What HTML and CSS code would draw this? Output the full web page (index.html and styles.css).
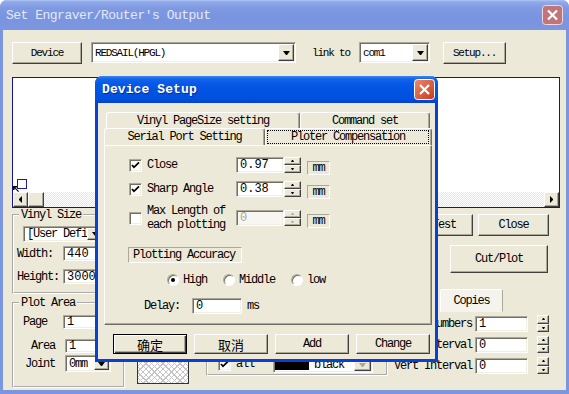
FILE: index.html
```html
<!DOCTYPE html>
<html lang="en">
<head>
    <meta charset="UTF-8">
    <title>Set Engraver/Router's Output</title>
    <link rel="stylesheet" href="styles.css">
</head>
<body>
<div class="win">
    <div class="caption">
        <span class="cap-title">Set Engraver/Router's Output</span>
        <svg class="cap-close" width="21" height="20" viewBox="0 0 21 20">
            <rect x="0.5" y="0.5" width="20" height="19" rx="3" fill="#c2747b" stroke="#eadbe3"/>
            <path d="M6 5.5l9 9M15 5.5l-9 9" stroke="#fff" stroke-width="2.2"/>
        </svg>
    </div>
    <div class="client">
        <!--设备选择行-->
        <div class="toprow">
            <div class="btn btn-device">Device</div>
            <div class="combo field combo-dev"><span class="combo-val">REDSAIL(HPGL)</span><span class="btn dd"><i class="tri-d"></i></span></div>
            <span class="lbl-link">link to</span>
            <div class="combo field combo-port"><span class="combo-val">com1</span><span class="btn dd"><i class="tri-d"></i></span></div>
            <div class="btn btn-setup">Setup...</div>
        </div>
        <!--预览区-->
        <div class="preview">
            <div class="canvas">
                <span class="page-mark"></span>
                <svg class="origin" width="6" height="6" viewBox="0 0 6 6"><path d="M0 0h4v1.5H2.2L6 5.2 5.2 6 1.5 2.2V4H0z" fill="#000"/></svg>
            </div>
            <div class="hscroll">
                <span class="btn sbtn"><i class="tri-l"></i></span>
                <span class="btn thumb"></span>
                <span class="track"></span>
                <span class="btn sbtn"><i class="tri-r"></i></span>
            </div>
        </div>
        <div class="lower">
            <div class="col-left">
                <fieldset class="grp grp-vinyl">
                    <legend>Vinyl Size</legend>
                    <div class="combo field combo-size"><span class="combo-val">[User Defi</span><span class="btn dd"><i class="tri-d"></i></span></div>
                    <div class="frow"><span class="flbl">Width:</span><span class="field inp inp-size">440</span></div>
                    <div class="frow frow-h"><span class="flbl">Height:</span><span class="field inp inp-size">3000</span></div>
                </fieldset>
                <fieldset class="grp grp-plot">
                    <legend>Plot Area</legend>
                    <div class="frow frow-page"><span class="flbl lbl-page">Page</span><span class="field inp inp-plot">1</span></div>
                    <div class="frow frow-area"><span class="flbl lbl-r">Area</span><span class="field inp inp-plot">1</span></div>
                    <div class="frow frow-joint"><span class="flbl lbl-r">Joint</span><div class="combo field combo-joint"><span class="combo-val">0mm</span><span class="btn dd"><i class="tri-d"></i></span></div></div>
                </fieldset>
            </div>
            <div class="col-mid">
                <div class="hatch"></div>
                <div class="grp-color">
                    <span class="chk"><svg width="11" height="11" viewBox="0 0 11 11"><path d="M2 5l2 2.3L9 2.3" stroke="#000" stroke-width="1.8" fill="none"/></svg></span>
                    <span class="lbl-all">all</span>
                    <div class="combo field combo-color"><span class="swatch"></span><span class="combo-val">black</span><span class="btn dd"><i class="tri-d tri-gray"></i></span></div>
                </div>
            </div>
            <div class="col-right">
                <div class="rbtns">
                    <div class="btn btn-test">Test</div>
                    <div class="btn btn-close">Close</div>
                </div>
                <div class="btn btn-cut">Cut/Plot</div>
                <div class="copies-tab">Copies</div>
                <div class="crow crow-first"><span class="clbl">Numbers</span><span class="field inp inp-c">1</span><span class="spin spin-c"><span class="btn sb"><i class="tri-u"></i></span><span class="btn sb"><i class="tri-dn"></i></span></span></div>
                <div class="crow"><span class="clbl">Interval</span><span class="field inp inp-c">0</span><span class="spin spin-c"><span class="btn sb"><i class="tri-u"></i></span><span class="btn sb"><i class="tri-dn"></i></span></span></div>
                <div class="crow"><span class="clbl">Vert Interval</span><span class="field inp inp-c">0</span><span class="spin spin-c"><span class="btn sb"><i class="tri-u"></i></span><span class="btn sb"><i class="tri-dn"></i></span></span></div>
            </div>
        </div>
    </div>

    <!--弹出的Device Setup对话框-->
    <div class="dlg">
        <div class="dlg-cap">
            <span class="dlg-title">Device Setup</span>
            <svg class="cap-close" width="21" height="21" viewBox="0 0 21 21">
                <defs><linearGradient id="xr" x1="0" y1="0" x2="1" y2="1"><stop offset="0" stop-color="#ef8a6c"/><stop offset="1" stop-color="#c7391a"/></linearGradient></defs>
                <rect x="0.5" y="0.5" width="20" height="20" rx="3" fill="url(#xr)" stroke="#fff"/>
                <path d="M6 6l9 9M15 6l-9 9" stroke="#fff" stroke-width="2.2"/>
            </svg>
        </div>
        <div class="dlg-body">
            <div class="tabs">
                <div class="tabrow tabrow-back">
                    <span class="tab tab-vinyl">Vinyl PageSize setting</span>
                    <span class="tab tab-cmd">Command set</span>
                </div>
                <div class="tabrow tabrow-front">
                    <span class="tab tab-serial">Serial Port Setting</span>
                    <span class="tab tab-comp"><span class="focus">Ploter Compensation</span></span>
                </div>
                <div class="panel">
                    <div class="opt">
                        <span class="chk"><svg width="11" height="11" viewBox="0 0 11 11"><path d="M2 5l2 2.3L9 2.3" stroke="#000" stroke-width="1.8" fill="none"/></svg></span>
                        <span class="olbl">Close</span>
                        <span class="field inp inp-val">0.97</span>
                        <span class="spin"><span class="btn sb"><i class="tri-u"></i></span><span class="btn sb"><i class="tri-dn"></i></span></span>
                        <span class="unit">mm</span>
                    </div>
                    <div class="opt">
                        <span class="chk"><svg width="11" height="11" viewBox="0 0 11 11"><path d="M2 5l2 2.3L9 2.3" stroke="#000" stroke-width="1.8" fill="none"/></svg></span>
                        <span class="olbl">Sharp Angle</span>
                        <span class="field inp inp-val">0.38</span>
                        <span class="spin"><span class="btn sb"><i class="tri-u"></i></span><span class="btn sb"><i class="tri-dn"></i></span></span>
                        <span class="unit">mm</span>
                    </div>
                    <div class="opt opt-tall">
                        <span class="chk"></span>
                        <span class="olbl olbl-2">Max Length of<br>each plotting</span>
                        <span class="field inp inp-val dis">0</span>
                        <span class="spin dis"><span class="btn sb"><i class="tri-u"></i></span><span class="btn sb"><i class="tri-dn"></i></span></span>
                        <span class="unit">mm</span>
                    </div>
                    <div class="acc">Plotting Accuracy</div>
                    <div class="radios">
                        <span class="radio on"></span><span class="rlbl">High</span>
                        <span class="radio"></span><span class="rlbl">Middle</span>
                        <span class="radio"></span><span class="rlbl">low</span>
                    </div>
                    <div class="delay">
                        <span class="dlbl">Delay:</span>
                        <span class="field inp inp-delay">0</span>
                        <span class="ms">ms</span>
                    </div>
                </div>
            </div>
            <div class="dlg-btns">
                <div class="btn dbtn default cjk">确定</div>
                <div class="btn dbtn cjk">取消</div>
                <div class="btn dbtn">Add</div>
                <div class="btn dbtn">Change</div>
            </div>
        </div>
    </div>
</div>
</body>
</html>
```
FILE: styles.css
```css
* {
    box-sizing: border-box;
}
body {
    margin: 0;
    background: #fff;
    color: #000;
    font-family: "Liberation Mono", "DejaVu Sans Mono", monospace;
    font-size: 12px;
    letter-spacing: -1.2px;
    white-space: nowrap;
}
i {
    display: block;
    box-sizing: content-box;
}

/*外层窗口(非活动状态)*/
.win {
    position: relative;
    width: 569px;
    height: 394px;
    background: #7b96df;
    border-radius: 7px 7px 0 0;
    overflow: hidden;
}
.caption {
    height: 30px;
    display: flex;
    align-items: center;
    justify-content: space-between;
    padding: 0 6px;
    background: linear-gradient(180deg, #aec4f3 0, #8fa9ea 2px, #7e9ae2 8px, #7a95df 60%, #7c97e0 100%);
}
.cap-title {
    font-size: 13px;
    letter-spacing: -0.5px;
    color: #e2e9f8;
}
.cap-close {
    display: block;
}
.client {
    margin: 0 3px;
    height: 360px;
    background: #ece9d8;
    padding: 11px 0 0 9px;
}

/*通用控件*/
.btn {
    display: flex;
    align-items: center;
    justify-content: center;
    background: #ece9d8;
    border: 1px solid;
    border-color: #fff #404040 #404040 #fff;
    box-shadow: inset -1px -1px #aca899;
}
.field {
    background: #fff;
    border: 1px solid;
    border-color: #aca899 #fff #fff #aca899;
    box-shadow: inset 1px 1px #716f64, inset -1px -1px #f1efe2;
}
.combo {
    display: flex;
    padding: 1px;
}
.combo-val {
    flex: 1;
    display: flex;
    align-items: center;
    padding-left: 2px;
}
.dd {
    flex: none;
    width: 16px;
}
.tri-d {
    width: 1px;
    height: 0;
    border-left: 3px solid transparent;
    border-right: 3px solid transparent;
    border-top: 4px solid #000;
}
.tri-gray {
    border-top-color: #aca899;
}
.tri-l {
    width: 0;
    height: 1px;
    border-top: 3px solid transparent;
    border-bottom: 3px solid transparent;
    border-right: 3px solid #000;
}
.tri-r {
    width: 0;
    height: 1px;
    border-top: 3px solid transparent;
    border-bottom: 3px solid transparent;
    border-left: 3px solid #000;
}
.tri-u {
    width: 1px;
    height: 0;
    border-left: 1px solid transparent;
    border-right: 1px solid transparent;
    border-bottom: 2px solid #000;
}
.tri-dn {
    width: 1px;
    height: 0;
    border-left: 1px solid transparent;
    border-right: 1px solid transparent;
    border-top: 2px solid #000;
}
.inp {
    display: flex;
    align-items: center;
    padding-left: 3px;
    letter-spacing: 0;
}
.spin {
    display: flex;
    flex-direction: column;
    width: 17px;
    height: 16px;
}
.sb {
    flex: 1;
}
.chk {
    flex: none;
    width: 13px;
    height: 13px;
    display: flex;
    align-items: center;
    justify-content: center;
    background: #fff;
    border: 1px solid;
    border-color: #aca899 #fff #fff #aca899;
    box-shadow: inset 1px 1px #716f64, inset -1px -1px #f1efe2;
}
.chk svg {
    display: block;
}

/*第一行*/
.toprow {
    display: flex;
    align-items: center;
    height: 23px;
    font-size: 11px;
}
.btn-device {
    width: 70px;
    height: 22px;
}
.combo-dev {
    margin-left: 9px;
    width: 205px;
    height: 21px;
}
.lbl-link {
    margin-left: 16px;
    width: 47px;
}
.combo-port {
    width: 71px;
    height: 21px;
}
.btn-setup {
    margin-left: 13px;
    width: 63px;
    height: 22px;
}

/*预览*/
.preview {
    margin-top: 13px;
    width: 548px;
    height: 131px;
    border: 1px solid #14148c;
    background: #fff;
    display: flex;
    flex-direction: column;
}
.canvas {
    flex: 1;
    position: relative;
}
.page-mark {
    position: absolute;
    left: 4px;
    top: 101px;
    width: 10px;
    height: 10px;
    border: 1px solid #1c1ca0;
}
.origin {
    position: absolute;
    left: 0;
    top: 108px;
}
.hscroll {
    display: flex;
    height: 15px;
}
.sbtn {
    width: 15px;
}
.thumb {
    width: 16px;
}
.track {
    flex: 1;
    background: repeating-conic-gradient(#ece9d8 0 25%, #fff 0 50%) 0 0 / 2px 2px;
}

/*下半部分*/
.lower {
    display: flex;
    height: 182px;
}
.col-left {
    width: 113px;
}
.grp {
    margin: 0;
    min-width: 0;
    border: 2px groove #fff;
    padding: 0 0 8px 3px;
}
.grp legend {
    margin-left: 2px;
    padding: 0 2px;
    line-height: 14px;
}
.combo-size {
    margin: 4px 0 0 6px;
    width: 82px;
    height: 16px;
}
.frow {
    display: flex;
    align-items: center;
    height: 15px;
    margin-top: 4px;
}
.frow-h {
    margin-top: 8px;
}
.flbl {
    width: 46px;
    flex: none;
}
.inp-size {
    width: 52px;
    height: 15px;
}
.grp-plot {
    margin-top: 2px;
    padding-bottom: 14px;
}
.frow-page {
    margin-top: 5px;
    height: 14px;
}
.lbl-page {
    padding-left: 6px;
}
.lbl-r {
    width: 48px;
    text-align: right;
    padding-right: 10px;
}
.frow-area {
    margin-top: 10px;
    height: 14px;
}
.frow-joint {
    margin-top: 2px;
    height: 17px;
}
.inp-plot {
    width: 50px;
    height: 14px;
}
.combo-joint {
    width: 46px;
    height: 17px;
}
.combo-joint .dd {
    width: 15px;
}

.col-mid {
    margin-left: 12px;
    width: 258px;
    display: flex;
    align-items: flex-end;
    padding-bottom: 6px;
}
.hatch {
    width: 52px;
    height: 28px;
    border: 1px solid #333;
    background:
        repeating-linear-gradient(45deg, transparent 0 3px, #c4c4c4 3px 4px),
        repeating-linear-gradient(-45deg, transparent 0 3px, #c4c4c4 3px 4px),
        #fff;
}
.grp-color {
    margin: 0 0 8px 17px;
    width: 182px;
    height: 44px;
    border: 2px groove #fff;
    display: flex;
    align-items: flex-end;
    padding: 0 0 1px 10px;
}
.grp-color .chk {
    margin-bottom: 2px;
}
.lbl-all {
    width: 42px;
    padding-left: 5px;
    margin-bottom: 2px;
}
.combo-color {
    width: 100px;
    height: 16px;
}
.swatch {
    width: 34px;
    background: #000;
    margin: 1px 0;
}
.combo-color .combo-val {
    padding-left: 5px;
}
.combo-color .dd {
    width: 17px;
}

.col-right {
    width: 165px;
    display: flex;
    flex-direction: column;
    align-items: flex-start;
}
.rbtns {
    display: flex;
    gap: 5px;
    margin: 6px 0 0 20px;
}
.btn-test {
    width: 58px;
    height: 22px;
}
.btn-close {
    width: 71px;
    height: 22px;
}
.btn-cut {
    margin: 9px 0 0 55px;
    width: 98px;
    height: 28px;
}
.copies-tab {
    margin: 16px 0 0 45px;
    width: 63px;
    height: 23px;
    display: flex;
    align-items: center;
    justify-content: center;
    background: #f4f3ee;
    border: 1px solid;
    border-color: #fff #aca899 transparent #fff;
    border-radius: 2px 2px 0 0;
}
.crow {
    display: flex;
    align-items: center;
    height: 17px;
    margin-top: 4px;
}
.crow-first {
    margin-top: 3px;
}
.clbl {
    width: 78px;
    margin-left: -1px;
    text-align: right;
}
.inp-c {
    margin-left: 3px;
    width: 53px;
    height: 16px;
}
.spin-c {
    margin-left: 9px;
    width: 12px;
    height: 17px;
}

/*Device Setup对话框*/
.dlg {
    position: absolute;
    left: 95px;
    top: 76px;
    width: 343px;
    height: 286px;
    background: #ece9d8;
    border: 3px solid #0b3ed3;
    border-top: 0;
    border-radius: 8px 8px 0 0;
}
.dlg-cap {
    height: 27px;
    margin: 0 -3px;
    padding: 0 3px 0 7px;
    display: flex;
    align-items: center;
    justify-content: space-between;
    border-radius: 7px 7px 0 0;
    background: linear-gradient(180deg, #3c88f6 0, #1164ec 3px, #0758e6 8px, #0254e2 50%, #0050de 85%, #0640cc 100%);
}
.dlg-title {
    font-size: 13px;
    font-weight: bold;
    letter-spacing: 0.1px;
    color: #fff;
    text-shadow: 1px 1px #0a2a99;
}
.dlg-body {
    padding: 9px 3px 0 6px;
}
.tabs {
    width: 328px;
}
.tabrow {
    display: flex;
}
.tabrow-back {
    height: 16px;
    padding-left: 2px;
}
.tabrow-front {
    height: 17px;
}
.tab {
    display: flex;
    align-items: center;
    justify-content: center;
    border: 1px solid;
    border-bottom: 0;
    border-color: #fff #716f64 transparent #fff;
    border-radius: 3px 3px 0 0;
    box-shadow: inset -1px 0 #aca899;
}
.tab-vinyl {
    width: 194px;
}
.tab-cmd {
    width: 130px;
}
.tab-serial {
    width: 161px;
}
.tab-comp {
    width: 167px;
    padding: 1px 2px 1px 1px;
    align-items: stretch;
}
.focus {
    flex: 1;
    display: flex;
    align-items: center;
    justify-content: center;
    border: 1px dotted #000;
}
.panel {
    height: 180px;
    border: 1px solid;
    border-color: #fff #716f64 #716f64 #fff;
    box-shadow: inset -1px -1px #aca899;
    padding: 11px 0 0 24px;
}
.opt {
    display: flex;
    align-items: center;
    height: 16px;
}
.opt + .opt {
    margin-top: 8px;
}
.opt-tall {
    height: 26px;
    margin-bottom: -2px;
}
.olbl {
    width: 94px;
    padding-left: 5px;
    flex: none;
}
.olbl-2 {
    line-height: 14px;
}
.inp-val {
    width: 48px;
    height: 16px;
}
.inp-val.dis {
    background: #f7f6f2;
    color: #aca899;
}
.spin.dis .tri-u {
    border-bottom-color: #aca899;
}
.spin.dis .tri-dn {
    border-top-color: #aca899;
}
.unit {
    margin: 5px 0 0 6px;
    width: 23px;
    height: 14px;
    display: flex;
    align-items: center;
    justify-content: center;
    border: 1px solid;
    border-color: #aca899 #fff #fff #aca899;
}
.acc {
    margin: 18px 0 0 -1px;
    width: 114px;
    height: 16px;
    padding-left: 4px;
    display: flex;
    align-items: center;
    border: 1px solid;
    border-color: #aca899 #fff #fff #aca899;
}
.radios {
    display: flex;
    align-items: center;
    height: 14px;
    margin-top: 10px;
    padding-left: 38px;
}
.radio {
    position: relative;
    width: 12px;
    height: 12px;
    border-radius: 50%;
    background: #fff;
    border: 1px solid;
    border-color: #aca899 #fff #fff #aca899;
    box-shadow: inset 1px 1px #716f64;
}
.radio.on::after {
    content: "";
    position: absolute;
    left: 3px;
    top: 3px;
    width: 4px;
    height: 4px;
    border-radius: 50%;
    background: #000;
}
.rlbl {
    margin: 0 16px 0 4px;
}
.delay {
    display: flex;
    align-items: center;
    height: 16px;
    margin-top: 11px;
    padding-left: 15px;
}
.dlbl {
    width: 48px;
}
.inp-delay {
    width: 50px;
    height: 16px;
}
.ms {
    margin-left: 5px;
}
.dlg-btns {
    display: flex;
    gap: 7px;
    margin-top: 9px;
    padding-left: 9px;
}
.dbtn {
    width: 74px;
    height: 20px;
}
.dbtn.default {
    border-color: #000;
    box-shadow: inset 1px 1px #fff, inset -1px -1px #404040, inset -2px -2px #aca899;
}
.cjk {
    font-family: "Noto Sans CJK SC", sans-serif;
    font-size: 13px;
    letter-spacing: 0;
}
```
